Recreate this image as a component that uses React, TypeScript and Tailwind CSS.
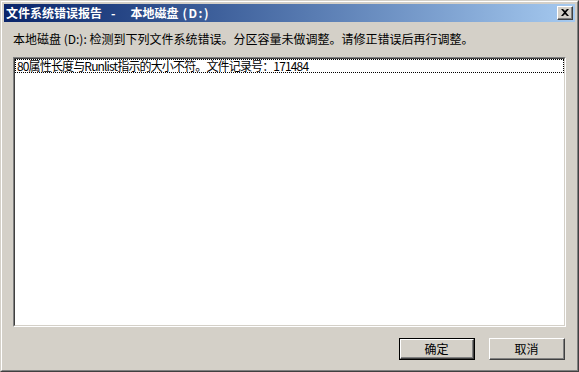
import React from 'react';

const font = { fontFamily: '"Noto Sans CJK SC", "Liberation Sans", sans-serif' };

const Button = ({ label, isDefault }: { label: string; isDefault?: boolean }) => (
  <button
    className={
      isDefault
        ? 'w-[76px] h-[22px] border border-black bg-[#d4d0c8] p-0'
        : 'w-[76px] h-[22px] bg-[#d4d0c8] p-0'
    }
  >
    <div className="h-full border-t border-l border-white border-b border-r border-b-[#404040] border-r-[#404040]">
      <div className="h-full flex items-center justify-center border-b border-r border-[#808080] text-[12px] text-black leading-none">
        {label}
      </div>
    </div>
  </button>
);

const App = () => {
  return (
    <div style={font} className="w-[579px] h-[372px] bg-[#d4d0c8] overflow-hidden">
      {/* window frame */}
      <div className="h-full border-t border-l border-[#d4d0c8] border-b border-r border-b-[#404040] border-r-[#404040]">
        <div className="h-full border-t border-l border-white border-b border-r border-b-[#808080] border-r-[#808080] p-[2px] flex flex-col">
          {/* Title bar */}
          <div className="h-[18px] flex items-center justify-between pl-[2px] pr-[2px] bg-gradient-to-r from-[#0a246a] to-[#a6caf0]">
            <div className="flex items-center text-white text-[12px] font-bold leading-none">
              <span>文件系统错误报告</span>
              <span className="ml-[9px] mr-[15px]">-</span>
              <span>本地磁盘</span>
              <span className="ml-[4px] tracking-[1.5px]">(D:)</span>
            </div>
            <div className="w-[16px] h-[14px] bg-[#d4d0c8] border-t border-l border-white border-b border-r border-b-[#404040] border-r-[#404040]">
              <div className="w-full h-full border-b border-r border-[#808080] flex items-center justify-center">
                <svg width="8" height="7" viewBox="0 0 8 7">
                  <path d="M0 0h2l2 2 2-2h2L5 3.5 8 7H6L4 5 2 7H0l3-3.5z" fill="#000" />
                </svg>
              </div>
            </div>
          </div>

          {/* Body */}
          <div className="flex-1 flex flex-col px-[9px] pt-[9px] pb-[8px]">
            <div className="text-[12px] text-black leading-[16px] h-[16px]">
              本地磁盘 (D:): 检测到下列文件系统错误。分区容量未做调整。请修正错误后再行调整。
            </div>

            {/* list box */}
            <div className="mt-[10px] h-[270px] border-t border-l border-[#808080] border-b border-r border-b-white border-r-white">
              <div className="h-full border-t border-l border-[#404040] border-b border-r border-b-[#d4d0c8] border-r-[#d4d0c8] bg-white">
                <div className="h-[14px] border border-dotted border-black flex items-center pl-[1px] text-[12px] tracking-[-0.85px] text-black leading-none">
                  80属性长度与Runlist指示的大小不符。文件记录号：171484
                </div>
              </div>
            </div>

            <div className="flex items-start justify-end gap-[14px] pr-[1px] pt-[11px]">
              <Button label="确定" isDefault />
              <Button label="取消" />
            </div>
          </div>
        </div>
      </div>
    </div>
  );
};

export default App;
